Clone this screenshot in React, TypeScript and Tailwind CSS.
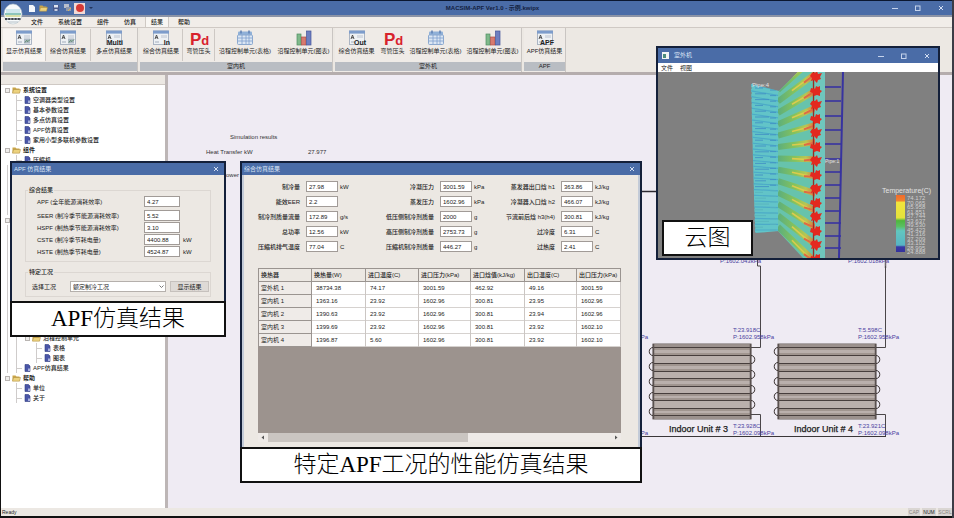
import React, { useId } from "react";

/* ---------- Icons ---------- */

function FormIcon({ tag }: { tag?: string }) {
  return (
    <svg width="28" height="16" viewBox="0 0 28 16" aria-hidden="true">
      <rect x="6.500" y="1" width="15" height="13.500" fill="#eef1f4" stroke="#9aa6b8" strokeWidth="0.8" />
      <rect x="6" y="0.600" width="16" height="3" fill="#7d9ccb" />
      <path d="M8 9l1.500-4l1.500 4M8.500 7.700h2" stroke="#444" strokeWidth="0.9" fill="none" />
      <rect x="14" y="5" width="6" height="3" fill="#d5dae2" />
      <rect x="8" y="11" width="4" height="2" fill="#c9cfd8" />
      {tag ? (
        <text x="23" y="14.500" fontSize="7" fontWeight="700" fill="#222" textAnchor="end">{tag}</text>
      ) : (
        <g>
          <rect x="14" y="8.500" width="6" height="5" fill="#aeb9c4" />
          <path d="M15 12.500l1.500-2 1.500 1 2-2" stroke="#5b8a6a" fill="none" />
        </g>
      )}
    </svg>
  );
}

function PdIcon() {
  return (
    <svg width="24" height="16" viewBox="0 0 24 16" aria-hidden="true">
      <text x="3" y="14.500" fontSize="17" fontWeight="700" fill="#d8222c">
        P<tspan fontSize="13">d</tspan>
      </text>
    </svg>
  );
}

function TableIcon() {
  return (
    <svg width="18" height="16" viewBox="0 0 18 16" aria-hidden="true">
      <rect x="2" y="1.500" width="14" height="5" rx="1" fill="#8fb0d8" />
      <rect x="1.500" y="5" width="15" height="9.500" rx="1" fill="#dbe6f3" stroke="#8ba8cf" />
      <path d="M2 8h14M2 11h14M6 5v9M10 5v9M13 5v9" stroke="#7fa0cd" strokeWidth="0.8" />
      <path d="M5 0.500v3M13 0.500v3" stroke="#5f7fb2" strokeWidth="1.500" />
    </svg>
  );
}

function ChartIcon() {
  return (
    <svg width="18" height="16" viewBox="0 0 18 16" aria-hidden="true">
      <rect x="2" y="4" width="4" height="11" fill="#7fb98a" stroke="#4f8e62" strokeWidth="0.7" />
      <rect x="6.500" y="7" width="4.500" height="8" fill="#d77a6f" stroke="#ad5148" strokeWidth="0.7" />
      <rect x="11.500" y="1" width="4.500" height="14" fill="#6d7fc0" stroke="#46559a" strokeWidth="0.7" />
    </svg>
  );
}

function FolderIcon() {
  return (
    <svg className="shrink-0" width="9" height="8" viewBox="0 0 9 8" aria-hidden="true">
      <path d="M0.500 1.500h3l1 1h3v4.500h-7z" fill="#c9a548" />
      <path d="M1.500 3.500h7l-1 3.700h-7z" fill="#ecd27e" stroke="#a8873a" strokeWidth="0.5" />
    </svg>
  );
}

function DocIcon() {
  return (
    <svg className="shrink-0" width="7" height="8" viewBox="0 0 7 8" aria-hidden="true">
      <path d="M1 0.500h3.500l1.500 1.500v5.500h-5z" fill="#4a56a8" stroke="#313c80" strokeWidth="0.6" />
      <path d="M4 4.500h2v2.500h-2z" fill="#a9b2dc" />
    </svg>
  );
}

function WindowControls({ className }: { className: string }) {
  return (
    <div className={`flex items-center ${className}`}>
      <button aria-label="Minimize" className="flex w-[12px] justify-center">
        <svg width="6" height="6"><path d="M0 3.500h6" stroke="#c5d3ec" /></svg>
      </button>
      <button aria-label="Maximize" className="flex w-[12px] justify-center">
        <svg width="6" height="6"><rect x="0.500" y="1" width="4.500" height="4.500" fill="none" stroke="#c5d3ec" /></svg>
      </button>
      <button aria-label="Close" className="flex w-[12px] justify-center">
        <CloseMark />
      </button>
    </div>
  );
}

function CloseMark() {
  return (
    <svg width="6" height="6" aria-hidden="true">
      <path d="M1 1l4 4M5 1l-4 4" stroke="#d3def2" />
    </svg>
  );
}

/* ---------- Top bars ---------- */

function TitleBar() {
  return (
    <header className="grid h-[17px] grid-cols-[1fr_auto_1fr] items-center border-t border-b-2 border-t-[#0b1730] border-b-[#8b93a6] bg-[#4a6ca7]">
      <div className="flex items-center gap-[4px] pl-[27px]">
        <svg width="7" height="9" aria-hidden="true"><path d="M1 1h4l2 2v5H1z" fill="#f5f7fb" /></svg>
        <FolderIcon />
        <svg width="8" height="8" aria-hidden="true"><rect x="1" y="1" width="6" height="6" fill="#48598c" /><rect x="2" y="1" width="4" height="2.500" fill="#dfe5f1" /><rect x="2.500" y="5" width="3" height="2" fill="#c7d0e3" /></svg>
        <svg width="8" height="8" aria-hidden="true"><rect x="0" y="0" width="5" height="4" fill="#b8bfcd" /><rect x="2" y="3" width="5" height="4" fill="#8e97ab" /><path d="M4 7l3-3" stroke="#d4b25a" /></svg>
        <button aria-label="Run" className="-ml-[2px] flex h-[11px] w-[11px] items-center justify-center bg-[#f1d9d5]">
          <span className="h-[8px] w-[8px] rounded-full bg-[#d63a35]" />
        </button>
        <svg width="4" height="3" aria-hidden="true"><path d="M0 0h4l-2 2z" fill="#22345c" /></svg>
      </div>
      <h1 className="pl-[32px] text-[6px] font-bold text-[#14213f]">MACSIM-APF Ver1.0 - 示例.kwipx</h1>
      <WindowControls className="justify-end gap-[11px] pr-[5px]" />
    </header>
  );
}

function AppOrb() {
  return (
    <svg className="absolute top-[3px] left-[2px]" width="20" height="22" viewBox="0 0 20 22" aria-hidden="true">
      <ellipse cx="10" cy="11" rx="9" ry="10" fill="#f7fafb" stroke="#b8c6cf" strokeWidth="0.6" />
      <path d="M3 6h14v4H3z" fill="#cfe7ee" />
      <path d="M2 11h16" stroke="#69b3a6" strokeWidth="1.500" />
      <path d="M2.500 13h15" stroke="#b9c659" strokeWidth="1" />
      <path d="M2 16h16" stroke="#3d444d" strokeWidth="1.800" strokeDasharray="2.500 0.600" />
      <path d="M5 19h10" stroke="#b4bfc6" />
    </svg>
  );
}

function MenuTabs() {
  const tabs = ["文件", "系统设置", "组件", "仿真", "结果", "帮助"];
  return (
    <nav className="flex h-[11px] items-stretch gap-[3px] border-b border-[#cfc9c4] bg-[#f1ede9] pl-[24px]">
      {tabs.map((t) => (
        <button
          key={t}
          className={
            t === "结果"
              ? "border-x border-[#cfc9c4] bg-[#f8f6f3] px-[5px] text-[6px] font-medium"
              : "px-[6px] text-[6px] font-medium"
          }
        >
          {t}
        </button>
      ))}
    </nav>
  );
}

type Tool = { label: string; icon: React.ReactNode; sep?: boolean; on?: boolean };

function RibbonGroup({ title, cols, tools }: { title: string; cols: string; tools: Tool[] }) {
  return (
    <section className="flex flex-col border-r border-[#c9c5c2] bg-[#efebe7]">
      <div className={`grid h-[34px] ${cols}`}>
        {tools.map((t, i) => (
          <button
            key={i}
            className={`my-[1px] flex flex-col items-center gap-[1px] pt-[1px] text-[6px] leading-[8px] whitespace-nowrap ${
              t.sep ? "border-r border-[#cdc8c4]" : ""
            } ${t.on ? "bg-[#f8f5f2]" : ""}`}
          >
            {t.icon}
            {t.label}
          </button>
        ))}
      </div>
      <div className="h-[9px] bg-[#b9bdc3] text-center text-[6px] leading-[9px]">{title}</div>
    </section>
  );
}

function Ribbon() {
  return (
    <div className="flex h-[44px] gap-[2px] bg-[#ece8e3] pl-[2px]">
      <RibbonGroup
        title="结果"
        cols="grid-cols-[43px_45px_46px]"
        tools={[
          { label: "显示仿真结果", icon: <FormIcon />, sep: true, on: true },
          { label: "综合仿真结果", icon: <FormIcon />, sep: true },
          { label: "多点仿真结果", icon: <FormIcon tag="Multi" /> },
        ]}
      />
      <RibbonGroup
        title="室内机"
        cols="grid-cols-[43px_32px_60px_57px]"
        tools={[
          { label: "综合仿真结果", icon: <FormIcon tag="In" />, sep: true },
          { label: "弯管压头", icon: <PdIcon />, sep: true },
          { label: "沿程控制单元(表格)", icon: <TableIcon /> },
          { label: "沿程控制单元(图表)", icon: <ChartIcon /> },
        ]}
      />
      <RibbonGroup
        title="室外机"
        cols="grid-cols-[43px_29px_57px_57px]"
        tools={[
          { label: "综合仿真结果", icon: <FormIcon tag="Out" /> },
          { label: "弯管压头", icon: <PdIcon /> },
          { label: "沿程控制单元(表格)", icon: <TableIcon /> },
          { label: "沿程控制单元(图表)", icon: <ChartIcon /> },
        ]}
      />
      <RibbonGroup title="APF" cols="grid-cols-[41px]" tools={[{ label: "APF仿真结果", icon: <FormIcon tag="APF" /> }]} />
    </div>
  );
}

/* ---------- Project tree ---------- */

function Toggle() {
  return <span className="h-[5px] w-[5px] shrink-0 border border-[#b9b5b2] bg-[#f0eeec]" />;
}

function Branch({ label }: { label: string }) {
  return (
    <div className="flex h-[10px] items-center gap-[2px] pl-[4px] text-[6px] leading-[10px] font-bold">
      <Toggle />
      <FolderIcon />
      {label}
    </div>
  );
}

function Leaf({ label }: { label: string }) {
  return (
    <li className="flex h-[10px] items-center gap-[2px] text-[6px] leading-[10px] font-medium whitespace-nowrap">
      <span className="h-px w-[5px] bg-[#cfcccb]" />
      <DocIcon />
      {label}
    </li>
  );
}

function Leaves({ items }: { items: string[] }) {
  return (
    <ul className="ml-[15px] border-l border-[#cfcccb]">
      {items.map((l) => (
        <Leaf key={l} label={l} />
      ))}
    </ul>
  );
}

function ProjectTree() {
  return (
    <aside className="flex w-[167px] shrink-0 flex-col border-r-[3px] border-[#bdb6b6] bg-white">
      <div className="h-[10px] shrink-0 border-b border-[#cfc9c4] bg-[#ece8e3]" />
      <div className="text-[#222]">
        <Branch label="系统设置" />
        <Leaves items={["空调器类型设置", "基本参数设置", "多点仿真设置", "APF仿真设置", "家用小型多联机参数设置"]} />
        <Branch label="组件" />
        <Leaves items={["压缩机"]} />
        <div className="ml-[6px] h-[50px] border-l border-[#cfcccb]" />
        <div className="flex h-[10px] items-center pl-[4px]"><Toggle /></div>
        <div className="ml-[6px] h-[108px] border-l border-[#cfcccb]" />
        <div className="ml-[6px] border-l border-[#cfcccb]">
          <ul className="ml-[8px] border-l border-[#cfcccb]">
            <li>
              <div className="flex h-[10px] items-center gap-[2px] pl-[8px] text-[6px] leading-[10px] font-medium">
                <Toggle />
                <FolderIcon />
                沿程控制单元
              </div>
              <ul className="ml-[19px] border-l border-[#cfcccb]">
                <Leaf label="表格" />
                <Leaf label="图表" />
              </ul>
            </li>
            <Leaf label="APF仿真结果" />
          </ul>
        </div>
        <Branch label="帮助" />
        <Leaves items={["单位", "关于"]} />
      </div>
    </aside>
  );
}

/* ---------- System diagram ---------- */

const TUBES = [347, 355, 363, 371, 378, 386, 393, 400, 408, 415];

function Coil({ x, name, inT, inP, outT, outP }: { x: number; name: string; inT: string; inP: string; outT: string; outP: string }) {
  return (
    <g transform={`translate(${x} 0)`}>
      <rect x="0" y="344" width="98" height="75" fill="#bab0ac" stroke="#6b625f" />
      <path d="M1 346H97M1 417.500H97" stroke="#9b918d" strokeWidth="3" />
      {TUBES.map((y, i) => (
        <g key={y}>
          <rect x="1" y={i % 2 ? y - 2 : y + 1} width="96" height="2" fill="#a0958f" />
          <path d={`M0 ${y + 0.5}H98`} stroke="#473e3c" />
        </g>
      ))}
      <path d="M0.500 344V419M97.500 344V419" stroke="#5a514f" strokeWidth="1.500" />
      {[351, 366, 381, 396, 411].map((y) => (
        <path key={y} d={`M0 ${y - 3.5}c-5 0-5 8 0 8`} fill="none" stroke="#3a3231" />
      ))}
      {[359, 374, 389, 404].map((y) => (
        <path key={y} d={`M98 ${y - 3.5}c5 0 5 8 0 8`} fill="none" stroke="#3a3231" />
      ))}
      <path d="M98 347.500h9.500V266M98 414.500h9.500V436" fill="none" stroke="#4a4648" />
      <text x="16" y="432" fontSize="9" fill="#222" stroke="#222" strokeWidth="0.250">{name}</text>
      <g fontSize="6" fill="#4a3fa0">
        <text x="80" y="332">{inT}</text>
        <text x="80" y="339">{inP}</text>
        <text x="80" y="428">{outT}</text>
        <text x="80" y="435">{outP}</text>
      </g>
    </g>
  );
}

function SystemDiagram() {
  return (
    <main className="relative min-w-0 flex-1 overflow-hidden bg-[#efebf3]">
      <svg className="absolute inset-0 h-full w-full" aria-label="System diagram">
        <g transform="translate(-168 -75)">
          <g fontSize="6" fill="#333">
            <text x="230" y="139">Simulation results</text>
            <text x="206" y="154">Heat Transfer kW</text>
            <text x="308" y="154">27.977</text>
            <text x="222" y="177">Power</text>
          </g>
          <path d="M640 191.500h20" stroke="#2b2830" strokeWidth="1.500" />
          <path d="M640 436.500H886" stroke="#3a3638" strokeWidth="1.200" />
          <path d="M757.500 256v10h3" fill="none" stroke="#4a4648" />
          <path d="M885.500 256v12" stroke="#6b6668" strokeWidth="1.500" />
          <g fontSize="6" fill="#4a3fa0">
            <text x="720" y="263">P:1602.043kPa</text>
            <text x="848" y="263">P:1602.018kPa</text>
            <text x="648" y="339" textAnchor="end">kPa</text>
            <text x="648" y="435" textAnchor="end">kPa</text>
          </g>
          <Coil x={653} name="Indoor Unit # 3" inT="T:23.918C" inP="P:1602.958kPa" outT="T:23.928C" outP="P:1602.098kPa" />
          <Coil x={778} name="Indoor Unit # 4" inT="T:5.598C" inP="P:1602.958kPa" outT="T:23.921C" outP="P:1602.098kPa" />
        </g>
      </svg>
    </main>
  );
}

/* ---------- Floating windows ---------- */

function Caption({ children }: { children: React.ReactNode }) {
  return (
    <div className="flex h-[36px] items-center justify-center border-2 border-[#111] bg-white font-['Liberation_Serif','Noto_Sans_CJK_SC',serif] text-[23px] leading-[30px] font-light text-black">
      {children}
    </div>
  );
}

function DialogTitle({ children }: { children: React.ReactNode }) {
  return (
    <div className="flex h-[12px] shrink-0 items-center justify-between bg-[#4a6ca7] pr-[5px] pl-[2px] text-[6px] text-[#dbe5f6]">
      <span>{children}</span>
      <button aria-label="关闭"><CloseMark /></button>
    </div>
  );
}

const inputClass = "h-[11px] w-full min-w-0 border border-[#a19b97] bg-white px-[2px] text-[6px] leading-[8px] text-[#222]";

function SummaryField({ label, value, unit }: { label: string; value: string; unit?: string }) {
  const id = useId();
  return (
    <div className="grid grid-cols-[107px_36px_1fr] items-center">
      <label htmlFor={id}>{label}</label>
      <input id={id} className={inputClass} defaultValue={value} />
      <span className="pl-[3px]">{unit}</span>
    </div>
  );
}

function ApfWindow() {
  return (
    <section className="absolute top-[161px] left-[9px] flex w-[216px] flex-col">
      <div className="flex h-[140px] flex-col border-2 border-b-0 border-[#14203a] bg-[#ece8e3] text-[6px] leading-[8px]">
        <DialogTitle>APF 仿真结果</DialogTitle>
        <fieldset className="mx-[13px] mt-[11px] flex flex-col gap-[1px] border border-[#dcd7d2] pt-[2px] pb-[4px] pl-[11px]">
          <legend className="-ml-[9px] px-[1px] font-medium">综合结果</legend>
          <div className="pb-[2px]">
            <SummaryField label="APF (全年能源消耗效率)" value="4.27" />
          </div>
          <SummaryField label="SEER (制冷季节能源消耗效率)" value="5.52" />
          <SummaryField label="HSPF (制热季节能源消耗效率)" value="3.10" />
          <SummaryField label="CSTE (制冷季节耗电量)" value="4400.88" unit="kW" />
          <SummaryField label="HSTE (制热季节耗电量)" value="4524.87" unit="kW" />
        </fieldset>
        <fieldset className="mx-[13px] mt-[6px] flex items-center border border-[#dcd7d2] pt-[5px] pb-[4px] pl-[6px]">
          <legend className="-ml-[4px] px-[1px] font-medium">特定工况</legend>
          <label htmlFor="condition" className="w-[38px]">选择工况</label>
          <div className="relative w-[96px]">
            <select id="condition" className="block h-[11px] w-full appearance-none border border-[#b5b0ac] bg-white pl-[2px] text-[6px] leading-[8px]">
              <option>额定制冷工况</option>
            </select>
            <svg className="pointer-events-none absolute top-[4px] right-[2px]" width="5" height="4" aria-hidden="true">
              <path d="M0.500 0.500l2 2l2-2" fill="none" stroke="#777" />
            </svg>
          </div>
          <button className="ml-[4px] h-[11px] w-[39px] border border-[#c6c1bd] bg-[#dedad6] text-[6px] leading-[8px]">显示结果</button>
        </fieldset>
      </div>
      <Caption>APF仿真结果</Caption>
    </section>
  );
}

function ResultField({ label, value, unit }: { label: string; value: string; unit?: string }) {
  const id = useId();
  return (
    <div className="grid grid-cols-[1fr_32px_24px] items-center whitespace-nowrap">
      <label htmlFor={id} className="pr-[6px] text-right font-medium">{label}</label>
      <input id={id} className={inputClass} defaultValue={value} />
      <span className="pl-[2px]">{unit}</span>
    </div>
  );
}

const RESULT_COLUMNS: [string, string, string?][][] = [
  [
    ["制冷量", "27.98", "kW"],
    ["能效EER", "2.2"],
    ["制冷剂质量流量", "172.89", "g/s"],
    ["总功率", "12.56", "kW"],
    ["压缩机排气温度", "77.04", "C"],
  ],
  [
    ["冷凝压力", "3001.59", "kPa"],
    ["蒸发压力", "1602.96", "kPa"],
    ["低压侧制冷剂质量", "2000", "g"],
    ["高压侧制冷剂质量", "2753.73", "g"],
    ["压缩机制冷剂质量", "446.27", "g"],
  ],
  [
    ["蒸发器出口焓 h1", "363.86", "kJ/kg"],
    ["冷凝器入口焓 h2", "466.07", "kJ/kg"],
    ["节流前后焓 h3(h4)", "300.81", "kJ/kg"],
    ["过冷度", "6.31", "C"],
    ["过热度", "2.41", "C"],
  ],
];

const HEADERS = ["换热器", "换热量(W)", "进口温度(C)", "进口压力(kPa)", "进口焓值(kJ/kg)", "出口温度(C)", "出口压力(kPa)"];
const ROWS = [
  ["室外机 1", "38734.38", "74.17", "3001.59", "462.92", "49.16", "3001.59"],
  ["室内机 1", "1363.16", "23.92", "1602.96", "300.81", "23.95", "1602.96"],
  ["室内机 2", "1390.63", "23.92", "1602.96", "300.81", "23.94", "1602.96"],
  ["室内机 3", "1399.69", "23.92", "1602.96", "300.81", "23.92", "1602.10"],
  ["室内机 4", "1396.87", "5.60", "1602.96", "300.81", "23.92", "1602.10"],
];

function ResultsWindow() {
  return (
    <section className="absolute top-[161px] left-[239px] flex w-[402px] flex-col">
      <div className="flex h-[286px] flex-col border-2 border-b-0 border-[#14203a] bg-[#ece8e3] text-[6px] leading-[8px]">
        <DialogTitle>综合仿真结果</DialogTitle>
        <div className="flex flex-1 flex-col border-x-2 border-[#c3cbd8] pr-[17px] pl-[14px]">
          <div className="-ml-[4px] grid grid-cols-[108px_134px_121px] pt-[6px]">
            {RESULT_COLUMNS.map((fields, i) => (
              <div key={i} className="flex flex-col gap-[4px]">
                {fields.map(([l, v, u]) => (
                  <ResultField key={l} label={l} value={v} unit={u} />
                ))}
              </div>
            ))}
          </div>
          <div className="mt-[16px] flex h-[174px] flex-col bg-[#9c938e]">
            <table className="w-full table-fixed border-collapse bg-white">
              <colgroup>
                <col className="w-[53px]" />
                <col className="w-[54px]" />
                <col className="w-[53px]" />
                <col className="w-[52px]" />
                <col className="w-[54px]" />
                <col className="w-[52px]" />
                <col />
              </colgroup>
              <thead>
                <tr className="h-[13px] border-y border-[#9a9490] bg-[#ece8e3]">
                  {HEADERS.map((h) => (
                    <th key={h} scope="col" className="border-x border-[#9a9490] p-0 pl-[2px] text-left leading-[8px] font-medium whitespace-nowrap">{h}</th>
                  ))}
                </tr>
              </thead>
              <tbody>
                {ROWS.map((r) => (
                  <tr key={r[0]} className="h-[13px] border-b border-[#d6d2cf]">
                    {r.map((c, i) =>
                      i === 0 ? (
                        <th key={i} scope="row" className="border border-[#9a9490] bg-[#efebe8] p-0 pl-[2px] text-left leading-[8px] font-normal">{c}</th>
                      ) : (
                        <td key={i} className="border-r border-[#cbc6c3] p-0 pl-[4px] leading-[8px]">{c}</td>
                      )
                    )}
                  </tr>
                ))}
              </tbody>
            </table>
            <div className="mt-auto flex h-[9px] items-center bg-[#eeeae7]">
              <svg width="10" height="9" aria-hidden="true"><path d="M6 2.500v4L3.500 4.500z" fill="#555" /></svg>
              <div className="h-full w-[200px] bg-[#cac5c1]" />
              <svg className="ml-auto" width="10" height="9" aria-hidden="true"><path d="M4 2.500v4l2.500-2z" fill="#555" /></svg>
            </div>
          </div>
        </div>
      </div>
      <Caption>特定APF工况的性能仿真结果</Caption>
    </section>
  );
}

const RUNGS = [87, 101, 116, 130, 144, 159, 172, 185, 198, 211, 223, 236, 248];
const FINS = Array.from({ length: 26 }, (_, i) => i);
const SCALE = ["74.172", "70.065", "65.958", "61.851", "57.744", "53.637", "49.530", "45.423", "41.316", "37.209", "33.102", "28.995", "24.888"];

function Contour() {
  return (
    <svg className="block h-full w-full" viewBox="658 72 280 186" preserveAspectRatio="xMidYMid slice" aria-label="Temperature contour">
      <defs>
        <clipPath id="fan"><path d="M778 92L798 72H815V258H803L778 231Z" /></clipPath>
        <clipPath id="panel"><path d="M751 84L779 91V231L755 233Z" /></clipPath>
        <linearGradient id="flow" gradientUnits="userSpaceOnUse" x1="779" x2="815" y1="0" y2="0">
          <stop offset="0" stopColor="#5fb07a" />
          <stop offset="0.450" stopColor="#86c35c" />
          <stop offset="0.750" stopColor="#b9c653" />
          <stop offset="1" stopColor="#d9743f" />
        </linearGradient>
        <linearGradient id="legend" x1="0" x2="0" y1="0" y2="1">
          <stop offset="0" stopColor="#ef6a2c" />
          <stop offset="0.100" stopColor="#f0822e" />
          <stop offset="0.130" stopColor="#f1e43c" />
          <stop offset="0.400" stopColor="#e4e23c" />
          <stop offset="0.450" stopColor="#4fb63e" />
          <stop offset="0.550" stopColor="#5abf62" />
          <stop offset="0.630" stopColor="#62c6c0" />
          <stop offset="0.880" stopColor="#58b4c4" />
          <stop offset="0.910" stopColor="#3a39a5" />
          <stop offset="1" stopColor="#34329c" />
        </linearGradient>
      </defs>
      <rect x="640" y="60" width="320" height="210" fill="#808080" />
      <g clipPath="url(#panel)">
        <rect x="750" y="80" width="30" height="156" fill="#62c4c8" />
        {FINS.map((i) => (
          <g key={i}>
            <path d={`M751 ${85 + i * 5.8}L779 ${90 + i * 5.6}`} stroke="#4cabc8" strokeWidth="1.200" />
            <path d={`M755 ${88 + i * 5.8}h${8 + (i % 3) * 3}M770 ${90 + i * 5.6}h6`} stroke={i < 18 ? "#3f8cc4" : "#58b3bd"} strokeWidth="0.8" />
          </g>
        ))}
      </g>
      <path d="M751 82V150L755 233" stroke="#808080" strokeDasharray="2 3" fill="none" />
      <rect x="813" y="72" width="12" height="186" fill="#6fc6bd" />
      <g clipPath="url(#fan)">
        <rect x="778" y="72" width="38" height="186" fill="#67c3ac" />
        {FINS.filter((i) => i % 2 === 0).map((i) => (
          <g key={i}>
            <path d={`M778 ${90 + i * 5.7}L816 ${56 + i * 8.6}`} stroke="url(#flow)" strokeWidth="6" />
            <path d={`M792 ${77 + i * 6.8}L812 ${59 + i * 8.4}`} stroke="#dccb4c" strokeWidth="1.600" />
            <path d={`M804 ${67 + i * 7.8}L816 ${56 + i * 8.6}`} stroke="#df6a45" strokeWidth="2" />
          </g>
        ))}
      </g>
      <path d="M813.500 72V258" stroke="#9c2a25" strokeWidth="1.300" />
      {FINS.slice(0, 14).map((i) => (
        <path
          key={i}
          transform={`translate(813 ${71 + i * 14})`}
          d={i % 2 ? "M-2 3l4 1l1-3l2 1l2-1v4l2 1l-2 2v3l-3-1l-3 1l-1-3l-3-1z" : "M-1 2l3 0l2-2l1 3l4-1l-2 4l1 2l-3 1l-1 3l-3-3l-3 1l1-3l-2-2z"}
          fill="#e3291f"
        />
      ))}
      <path d="M843 72L841 165L839 258" stroke="#3733a0" strokeWidth="2" fill="none" />
      {RUNGS.map((y) => (
        <path key={y} d={`M825 ${y}H841`} stroke="#3733a0" strokeWidth="1.600" />
      ))}
      <g fill="#e2e2e2" fontSize="6">
        <text x="752" y="87">Pipe:4</text>
        <text x="825" y="163" fontSize="5">Pipe:1</text>
        <text x="882" y="193" fontSize="7">Temperature(C)</text>
      </g>
      <rect x="896" y="195" width="9" height="57" fill="url(#legend)" />
      <g fill="#cfcfcf" fontSize="6">
        {SCALE.map((s, i) => (
          <text key={s} x="907" y={200 + i * 4.5}>{s}</text>
        ))}
      </g>
    </svg>
  );
}

function ContourWindow() {
  return (
    <section className="absolute top-[46px] right-[12px] flex h-[214px] w-[284px] flex-col border-2 border-[#14203a] bg-[#808080]">
      <div className="flex h-[15px] shrink-0 items-center gap-[5px] bg-[#4a6ca7] pl-[4px] text-[6px] text-[#dbe5f6]">
        <svg width="7" height="7" aria-hidden="true"><rect width="7" height="7" fill="#f2f5f5" /><rect x="1" y="2" width="3" height="4" fill="#4d8d7c" /></svg>
        <span>室外机</span>
        <WindowControls className="ml-auto gap-[11px] pr-[5px]" />
      </div>
      <nav className="flex h-[9px] shrink-0 items-center gap-[7px] bg-white pl-[3px] text-[6px] leading-[8px]">
        <button>文件</button>
        <button>视图</button>
      </nav>
      <div className="min-h-0 flex-1">
        <Contour />
      </div>
      <div className="absolute bottom-[2px] left-[4px] w-[91px]">
        <Caption>云图</Caption>
      </div>
    </section>
  );
}

/* ---------- Page ---------- */

function StatusBar() {
  return (
    <footer className="flex h-[10px] shrink-0 items-center border-b-2 border-[#111] bg-[#ece8e3] pl-[1px] text-[5px] leading-[8px]">
      <span>Ready</span>
      <div className="ml-auto flex gap-[2px] text-center">
        <span className="w-[12px] bg-[#dad6d3] text-[#8b8683]">CAP</span>
        <span className="w-[14px] bg-[#dad6d3]">NUM</span>
        <span className="w-[14px] bg-[#dad6d3] text-[#8b8683]">SCRL</span>
      </div>
    </footer>
  );
}

export default function App() {
  return (
    <div className="relative flex min-h-screen flex-col overflow-hidden border-r-2 border-l border-r-[#3c3c46] border-l-[#111] bg-[#ece8e3] font-['Liberation_Sans','Noto_Sans_CJK_SC',sans-serif] text-[#222]">
      <TitleBar />
      <MenuTabs />
      <Ribbon />
      <div className="h-[3px] shrink-0 bg-[#b5adad]" />
      <div className="flex flex-1">
        <ProjectTree />
        <SystemDiagram />
      </div>
      <StatusBar />
      <AppOrb />
      <ApfWindow />
      <ResultsWindow />
      <ContourWindow />
    </div>
  );
}
